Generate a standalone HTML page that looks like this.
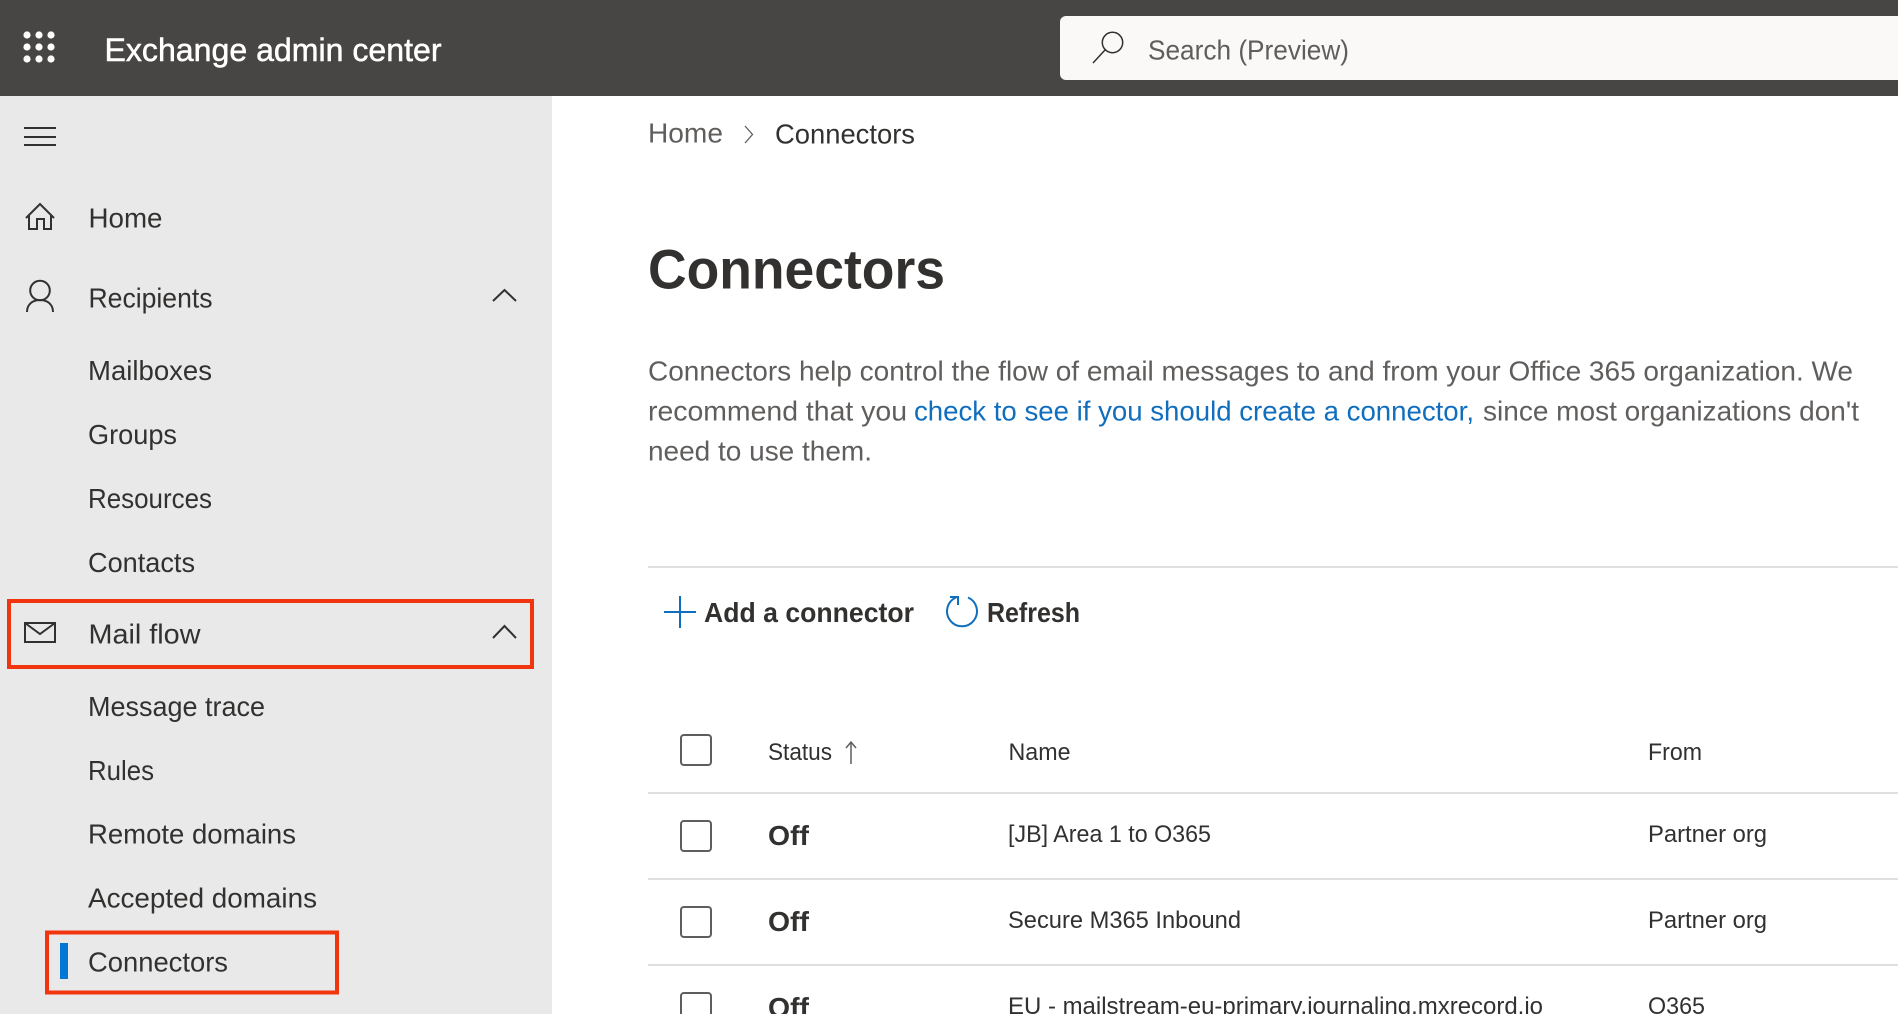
<!DOCTYPE html>
<html lang="en">
<head>
<meta charset="utf-8">
<title>Exchange admin center - Connectors</title>
<style>
html,body{margin:0;padding:0;width:1898px;height:1014px;overflow:hidden;background:#fff}
svg{display:block;filter:blur(.35px)}
text{font-family:"Liberation Sans",sans-serif;fill:#323130}
.nav{font-size:28px}
.grey{fill:#605e5c}
.cell{font-size:24px}
.icon{fill:none;stroke:#323130;stroke-width:2}
.red{fill:none;stroke:#f0350f;stroke-width:4}
.cb{fill:#fff;stroke:#605e5c;stroke-width:2}
.rule{stroke:#e1dfdd;stroke-width:2}
</style>
</head>
<body>
<svg width="1898" height="1014" viewBox="0 0 1898 1014" xmlns="http://www.w3.org/2000/svg">
<rect width="1898" height="1014" fill="#fff"/>
<rect x="0" y="96" width="552" height="918" fill="#e9e9e9"/>
<rect width="1898" height="96" fill="#484644"/>

<g fill="#fff">
<circle cx="27" cy="35" r="3.600"/><circle cx="39" cy="35" r="3.600"/><circle cx="51" cy="35" r="3.600"/>
<circle cx="27" cy="47" r="3.600"/><circle cx="39" cy="47" r="3.600"/><circle cx="51" cy="47" r="3.600"/>
<circle cx="27" cy="59" r="3.600"/><circle cx="39" cy="59" r="3.600"/><circle cx="51" cy="59" r="3.600"/>
</g>
<text x="104.500" y="61" font-size="32" style="fill:#fff;stroke:#fff;stroke-width:.5" textLength="337" lengthAdjust="spacingAndGlyphs">Exchange admin center</text>

<rect x="1060" y="16" width="860" height="64" rx="6" fill="#faf9f8"/>
<circle cx="1112.500" cy="42.500" r="10.200" fill="none" stroke="#323130" stroke-width="1.500"/>
<path d="M1105 50L1093 63" fill="none" stroke="#323130" stroke-width="1.500"/>
<text x="1148" y="59.500" font-size="28" class="grey" textLength="201" lengthAdjust="spacingAndGlyphs">Search (Preview)</text>

<path d="M24 128H56M24 137H56M24 145H56" class="icon"/>

<path d="M26 218L40 204L54 218M29 215V229H37V219H44V229H51V215" class="icon"/>
<text x="88.500" y="227.500" class="nav" textLength="74" lengthAdjust="spacingAndGlyphs">Home</text>

<circle cx="40" cy="290.500" r="9.800" class="icon"/>
<path d="M27 312C27 304 33 300 40 300C47 300 53 304 53 312" class="icon"/>
<text x="88.500" y="307.500" class="nav" textLength="124" lengthAdjust="spacingAndGlyphs">Recipients</text>
<path d="M493 301L504.500 290L516 301" class="icon"/>

<text x="88" y="380" class="nav" textLength="124" lengthAdjust="spacingAndGlyphs">Mailboxes</text>
<text x="88" y="444" class="nav" textLength="89" lengthAdjust="spacingAndGlyphs">Groups</text>
<text x="88" y="508" class="nav" textLength="124" lengthAdjust="spacingAndGlyphs">Resources</text>
<text x="88" y="572" class="nav" textLength="107" lengthAdjust="spacingAndGlyphs">Contacts</text>

<rect x="9" y="601" width="523" height="66" class="red"/>
<rect x="25" y="623" width="30" height="19" class="icon"/>
<path d="M25 623L40 634L55 623" class="icon"/>
<text x="88.500" y="643.500" class="nav" textLength="112" lengthAdjust="spacingAndGlyphs">Mail flow</text>
<path d="M493 638L504.500 626L516 638" class="icon"/>

<text x="88" y="716" class="nav" textLength="177" lengthAdjust="spacingAndGlyphs">Message trace</text>
<text x="88" y="780" class="nav" textLength="66" lengthAdjust="spacingAndGlyphs">Rules</text>
<text x="88" y="843.500" class="nav" textLength="208" lengthAdjust="spacingAndGlyphs">Remote domains</text>
<text x="88" y="907.500" class="nav" textLength="229" lengthAdjust="spacingAndGlyphs">Accepted domains</text>

<rect x="47" y="932.500" width="290" height="60" class="red"/>
<rect x="60" y="943" width="8" height="36" fill="#0078d4"/>
<text x="88" y="971.500" class="nav" textLength="140" lengthAdjust="spacingAndGlyphs">Connectors</text>

<text x="648" y="142.500" font-size="28" class="grey" textLength="75" lengthAdjust="spacingAndGlyphs">Home</text>
<path d="M745 126L752.500 134.500L745 143" fill="none" stroke="#605e5c" stroke-width="1.300"/>
<text x="775" y="143.500" font-size="28" textLength="140" lengthAdjust="spacingAndGlyphs">Connectors</text>

<text x="648" y="288.500" font-size="56" font-weight="700" textLength="297" lengthAdjust="spacingAndGlyphs">Connectors</text>

<text x="648" y="380.500" font-size="28" class="grey" textLength="1205" lengthAdjust="spacingAndGlyphs">Connectors help control the flow of email messages to and from your Office 365 organization. We</text>
<text x="648" y="420.500" font-size="28" class="grey" textLength="259" lengthAdjust="spacingAndGlyphs">recommend that you</text>
<text x="914" y="420.500" font-size="28" style="fill:#106ebe" textLength="560" lengthAdjust="spacingAndGlyphs">check to see if you should create a connector,</text>
<text x="1483" y="420.500" font-size="28" class="grey" textLength="376" lengthAdjust="spacingAndGlyphs">since most organizations don't</text>
<text x="648" y="460.500" font-size="28" class="grey" textLength="224" lengthAdjust="spacingAndGlyphs">need to use them.</text>

<line x1="648" y1="567" x2="1898" y2="567" class="rule"/>

<path d="M664 612H696M680 596V628" fill="none" stroke="#106ebe" stroke-width="2"/>
<text x="704" y="622" font-size="28" font-weight="700" textLength="210" lengthAdjust="spacingAndGlyphs">Add a connector</text>
<path d="M956 597.500A15 15 0 1 0 968 597.500" fill="none" stroke="#106ebe" stroke-width="2"/>
<path d="M950 597H958V605" fill="none" stroke="#106ebe" stroke-width="2"/>
<text x="987" y="622" font-size="28" font-weight="700" textLength="93" lengthAdjust="spacingAndGlyphs">Refresh</text>

<rect x="681" y="735" width="30" height="30" rx="3" class="cb"/>
<text x="768" y="760" class="cell" textLength="64" lengthAdjust="spacingAndGlyphs">Status</text>
<path d="M851 764V742M846 748L851 742L856 748" fill="none" stroke="#605e5c" stroke-width="1.500"/>
<text x="1008.500" y="760" class="cell" textLength="62" lengthAdjust="spacingAndGlyphs">Name</text>
<text x="1648" y="760" class="cell" textLength="54" lengthAdjust="spacingAndGlyphs">From</text>
<line x1="648" y1="793" x2="1898" y2="793" class="rule"/>

<rect x="681" y="821" width="30" height="30" rx="3" class="cb"/>
<text x="768" y="845" font-size="28" font-weight="700" textLength="41" lengthAdjust="spacingAndGlyphs">Off</text>
<text x="1008" y="842" class="cell" textLength="203" lengthAdjust="spacingAndGlyphs">[JB] Area 1 to O365</text>
<text x="1648" y="842" class="cell" textLength="119" lengthAdjust="spacingAndGlyphs">Partner org</text>
<line x1="648" y1="879" x2="1898" y2="879" class="rule"/>

<rect x="681" y="907" width="30" height="30" rx="3" class="cb"/>
<text x="768" y="931" font-size="28" font-weight="700" textLength="41" lengthAdjust="spacingAndGlyphs">Off</text>
<text x="1008" y="928" class="cell" textLength="233" lengthAdjust="spacingAndGlyphs">Secure M365 Inbound</text>
<text x="1648" y="928" class="cell" textLength="119" lengthAdjust="spacingAndGlyphs">Partner org</text>
<line x1="648" y1="965" x2="1898" y2="965" class="rule"/>

<rect x="681" y="993" width="30" height="30" rx="3" class="cb"/>
<text x="768" y="1017" font-size="28" font-weight="700" textLength="41" lengthAdjust="spacingAndGlyphs">Off</text>
<text x="1008" y="1014" class="cell" textLength="535" lengthAdjust="spacingAndGlyphs">EU - mailstream-eu-primary.journaling.mxrecord.io</text>
<text x="1648" y="1014" class="cell" textLength="57" lengthAdjust="spacingAndGlyphs">O365</text>
</svg>
</body>
</html>
